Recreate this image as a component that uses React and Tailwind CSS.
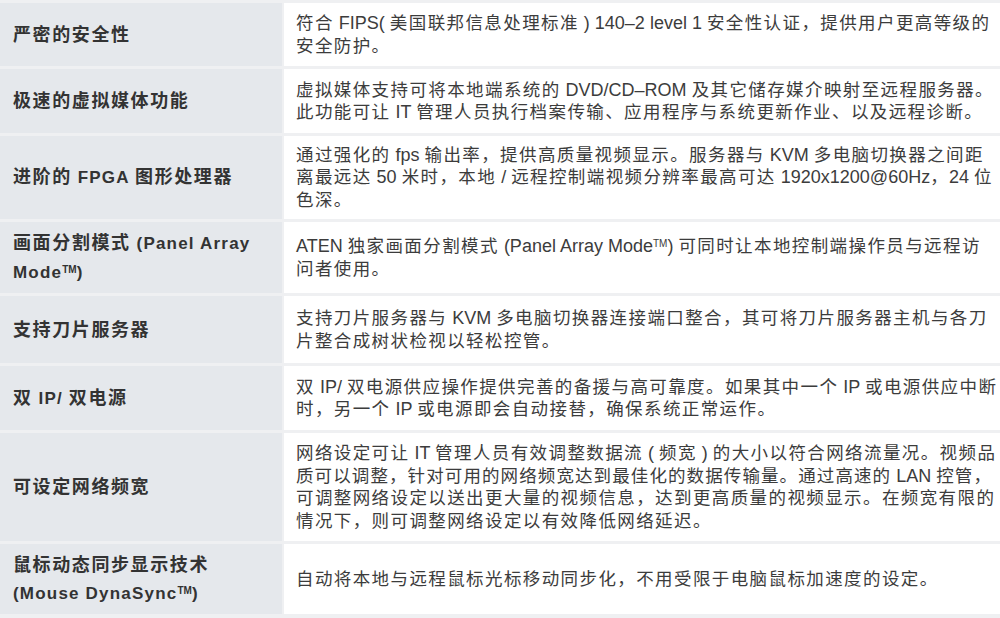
// ASCII runs get their own size and letter-spacing; CJK keeps the wider tracking
function runs(text, latinCls) {
  return text.split(/([\x20-\x7E–]+)/).map((part, k) =>
    /[\x20-\x7E–]/.test(part) && !/[^\x20-\x7E–]/.test(part) ? (
      <span key={k} className={latinCls}>{part}</span>
    ) : (
      part
    )
  );
}

const rows = [
  {
    h: "h-[63px]",
    title: ["严密的安全性"],
    body: [
      "符合 FIPS( 美国联邦信息处理标准 ) 140–2 level 1 安全性认证，提供用户更高等级的",
      "安全防护。",
    ],
  },
  {
    h: "h-[64px]",
    title: ["极速的虚拟媒体功能"],
    body: [
      "虚拟媒体支持可将本地端系统的 DVD/CD–ROM 及其它储存媒介映射至远程服务器。",
      "此功能可让 IT 管理人员执行档案传输、应用程序与系统更新作业、以及远程诊断。",
    ],
  },
  {
    h: "h-[83px]",
    title: ["进阶的 FPGA 图形处理器"],
    body: [
      "通过强化的 fps 输出率，提供高质量视频显示。服务器与 KVM 多电脑切换器之间距",
      "离最远达 50 米时，本地 / 远程控制端视频分辨率最高可达 1920x1200@60Hz，24 位",
      "色深。",
    ],
  },
  {
    h: "h-[71px]",
    title: ["画面分割模式 (Panel Array", ["Mode", "TM", ")"]],
    body: [
      ["ATEN 独家画面分割模式 (Panel Array Mode", "TM", ") 可同时让本地控制端操作员与远程访"],
      "问者使用。",
    ],
  },
  {
    h: "h-[67px]",
    title: ["支持刀片服务器"],
    body: [
      "支持刀片服务器与 KVM 多电脑切换器连接端口整合，其可将刀片服务器主机与各刀",
      "片整合成树状检视以轻松控管。",
    ],
  },
  {
    h: "h-[64px]",
    title: ["双 IP/ 双电源"],
    body: [
      "双 IP/ 双电源供应操作提供完善的备援与高可靠度。如果其中一个 IP 或电源供应中断",
      "时，另一个 IP 或电源即会自动接替，确保系统正常运作。",
    ],
  },
  {
    h: "h-[108px]",
    title: ["可设定网络频宽"],
    body: [
      "网络设定可让 IT 管理人员有效调整数据流 ( 频宽 ) 的大小以符合网络流量况。视频品",
      { text: "质可以调整，针对可用的网络频宽达到最佳化的数据传输量。通过高速的 LAN 控管，", tight: true },
      "可调整网络设定以送出更大量的视频信息，达到更高质量的视频显示。在频宽有限的",
      "情况下，则可调整网络设定以有效降低网络延迟。",
    ],
  },
  {
    h: "h-[70px]",
    title: ["鼠标动态同步显示技术", ["(Mouse DynaSync", "TM", ")"]],
    body: ["自动将本地与远程鼠标光标移动同步化，不用受限于电脑鼠标加速度的设定。"],
  },
];

function Line({ t, latinCls, supCls }) {
  if (typeof t === "string") return <div className="whitespace-nowrap">{runs(t, latinCls)}</div>;
  // long line that would run past the edge
  if (t.tight) return <div className="whitespace-nowrap tracking-[1.1px]">{runs(t.text, latinCls)}</div>;
  // [before, "TM", after]
  return (
    <div className="whitespace-nowrap">
      {runs(t[0], latinCls)}
      <sup className={supCls}>{t[1]}</sup>
      {runs(t[2], latinCls)}
    </div>
  );
}

export default function App() {
  return (
    <div
      className="w-[1000px] h-[618px] overflow-hidden bg-[#eff0f2] pt-[3px] flex flex-col gap-[3px]"
      style={{ fontFamily: '"Liberation Sans", "Noto Sans CJK SC", sans-serif' }}
    >
      {rows.map((r, i) => (
        <div key={i} className={`flex gap-[2px] ${r.h}`}>
          <div className="w-[282px] shrink-0 bg-[#e5e8ec] flex flex-col justify-center pl-[13px] text-[18px] leading-[28px] font-bold tracking-[1.6px] text-[#333333]">
            {r.title.map((t, j) => (
              <Line key={j} t={t} latinCls="text-[17px] tracking-[1.2px]" supCls="text-[10px] tracking-normal" />
            ))}
          </div>
          <div className="flex-1 bg-white flex flex-col justify-center pl-[12px] text-[17.5px] leading-[22.5px] tracking-[1.4px] text-[#3c3c3c]">
            {r.body.map((t, j) => (
              <Line key={j} t={t} latinCls="text-[18px] tracking-normal" supCls="text-[10px] tracking-normal" />
            ))}
          </div>
        </div>
      ))}
    </div>
  );
}
